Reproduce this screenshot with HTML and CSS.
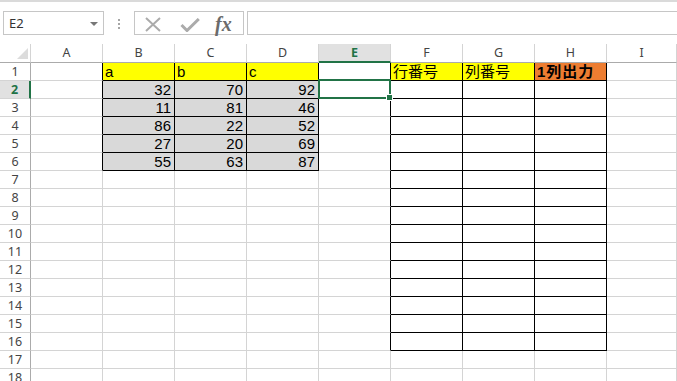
FILE: index.html
```html
<!DOCTYPE html>
<html lang="ja">
<head>
  <meta charset="UTF-8" />
  <meta name="viewport" content="width=device-width, initial-scale=1.0" />
  <title>Book1 - Excel</title>
  <link rel="stylesheet" href="styles.css">
</head>
<body>
  <div class="topline"></div>

  <div class="formula-bar">
    <div class="name-box">E2 <span class="caret"></span></div>
    <div class="grip">
      <svg width="4" height="10" viewBox="0 0 4 10"><rect x="1" y="0" width="2" height="2" fill="#a6a6a6"/><rect x="1" y="4" width="2" height="2" fill="#a6a6a6"/><rect x="1" y="8" width="2" height="2" fill="#a6a6a6"/></svg>
    </div>
    <div class="fx-box">
      <svg class="btn-x" width="18" height="15" viewBox="0 0 18 15"><path d="M2 1L16 14M16 1L2 14" stroke="#ababab" stroke-width="2" fill="none"/></svg>
      <svg class="btn-ok" width="20" height="14" viewBox="0 0 20 14"><path d="M1.5 7L7 12.5L18.8 1" stroke="#ababab" stroke-width="3" fill="none"/></svg>
      <span class="fx">fx</span>
    </div>
    <div class="formula-input"></div>
  </div>

  <div class="sheet">
    <div class="corner"><span class="tri"></span></div>
    <div class="ch">A</div><div class="ch">B</div><div class="ch">C</div><div class="ch">D</div>
    <div class="ch active">E</div><div class="ch">F</div><div class="ch">G</div><div class="ch">H</div><div class="ch">I</div>

    <div class="rh">1</div><div class="c br"></div>
    <div class="c yl br bb">a</div><div class="c yl br bb">b</div><div class="c yl br bb">c</div>
    <div class="c br"></div>
    <div class="c yl br bb">行番号</div><div class="c yl br bb">列番号</div><div class="c og br bb bold">1列出力</div>
    <div class="c"></div>

    <div class="rh active">2</div><div class="c br"></div>
    <div class="c gy num br bb">32</div><div class="c gy num br bb">70</div><div class="c gy num br bb">92</div>
    <div class="c br sel"><span class="handle"></span></div>
    <div class="c br bb"></div><div class="c br bb"></div><div class="c br bb"></div><div class="c"></div>

    <div class="rh">3</div><div class="c br"></div>
    <div class="c gy num br bb">11</div><div class="c gy num br bb">81</div><div class="c gy num br bb">46</div>
    <div class="c br"></div>
    <div class="c br bb"></div><div class="c br bb"></div><div class="c br bb"></div><div class="c"></div>

    <div class="rh">4</div><div class="c br"></div>
    <div class="c gy num br bb">86</div><div class="c gy num br bb">22</div><div class="c gy num br bb">52</div>
    <div class="c br"></div>
    <div class="c br bb"></div><div class="c br bb"></div><div class="c br bb"></div><div class="c"></div>

    <div class="rh">5</div><div class="c br"></div>
    <div class="c gy num br bb">27</div><div class="c gy num br bb">20</div><div class="c gy num br bb">69</div>
    <div class="c br"></div>
    <div class="c br bb"></div><div class="c br bb"></div><div class="c br bb"></div><div class="c"></div>

    <div class="rh">6</div><div class="c br"></div>
    <div class="c gy num br bb">55</div><div class="c gy num br bb">63</div><div class="c gy num br bb">87</div>
    <div class="c br"></div>
    <div class="c br bb"></div><div class="c br bb"></div><div class="c br bb"></div><div class="c"></div>

    <div class="rh">7</div><div class="c"></div><div class="c"></div><div class="c"></div><div class="c"></div><div class="c br"></div><div class="c br bb"></div><div class="c br bb"></div><div class="c br bb"></div><div class="c"></div>
    <div class="rh">8</div><div class="c"></div><div class="c"></div><div class="c"></div><div class="c"></div><div class="c br"></div><div class="c br bb"></div><div class="c br bb"></div><div class="c br bb"></div><div class="c"></div>
    <div class="rh">9</div><div class="c"></div><div class="c"></div><div class="c"></div><div class="c"></div><div class="c br"></div><div class="c br bb"></div><div class="c br bb"></div><div class="c br bb"></div><div class="c"></div>
    <div class="rh">10</div><div class="c"></div><div class="c"></div><div class="c"></div><div class="c"></div><div class="c br"></div><div class="c br bb"></div><div class="c br bb"></div><div class="c br bb"></div><div class="c"></div>
    <div class="rh">11</div><div class="c"></div><div class="c"></div><div class="c"></div><div class="c"></div><div class="c br"></div><div class="c br bb"></div><div class="c br bb"></div><div class="c br bb"></div><div class="c"></div>
    <div class="rh">12</div><div class="c"></div><div class="c"></div><div class="c"></div><div class="c"></div><div class="c br"></div><div class="c br bb"></div><div class="c br bb"></div><div class="c br bb"></div><div class="c"></div>
    <div class="rh">13</div><div class="c"></div><div class="c"></div><div class="c"></div><div class="c"></div><div class="c br"></div><div class="c br bb"></div><div class="c br bb"></div><div class="c br bb"></div><div class="c"></div>
    <div class="rh">14</div><div class="c"></div><div class="c"></div><div class="c"></div><div class="c"></div><div class="c br"></div><div class="c br bb"></div><div class="c br bb"></div><div class="c br bb"></div><div class="c"></div>
    <div class="rh">15</div><div class="c"></div><div class="c"></div><div class="c"></div><div class="c"></div><div class="c br"></div><div class="c br bb"></div><div class="c br bb"></div><div class="c br bb"></div><div class="c"></div>
    <div class="rh">16</div><div class="c"></div><div class="c"></div><div class="c"></div><div class="c"></div><div class="c br"></div><div class="c br bb"></div><div class="c br bb"></div><div class="c br bb"></div><div class="c"></div>
    <div class="rh">17</div><div class="c"></div><div class="c"></div><div class="c"></div><div class="c"></div><div class="c"></div><div class="c"></div><div class="c"></div><div class="c"></div><div class="c"></div>
    <div class="rh">18</div><div class="c"></div><div class="c"></div><div class="c"></div><div class="c"></div><div class="c"></div><div class="c"></div><div class="c"></div><div class="c"></div><div class="c"></div>
  </div>
</body>
</html>
```

FILE: styles.css
```css
body {
  margin: 0;
  background: #fff;
  font-family: "Liberation Sans", "Noto Sans CJK JP", sans-serif;
  overflow: hidden;
}
.topline {
  height: 2px;
  background: #dadada;
}

/* formula bar */
.formula-bar {
  display: flex;
  align-items: center;
  height: 24px;
  margin: 9px 0 9px 3px;
}
.name-box {
  flex: 0 0 101px;
  height: 24px;
  box-sizing: border-box;
  border: 1px solid #c6c6c6;
  display: flex;
  align-items: center;
  justify-content: space-between;
  padding: 0 5px 0 5px;
  font: 13px "Noto Sans", sans-serif;
  color: #333;
}
.caret {
  width: 0;
  height: 0;
  border-left: 4px solid transparent;
  border-right: 4px solid transparent;
  border-top: 4px solid #777;
  margin-top: 1px;
}
.grip {
  flex: 0 0 30px;
  display: flex;
  justify-content: center;
  padding-top: 2px;
}
.fx-box {
  flex: 0 0 110px;
  height: 24px;
  box-sizing: border-box;
  border: 1px solid #c6c6c6;
  display: flex;
  align-items: center;
  padding: 2px 0 0 9px;
}
.btn-ok {
  margin-left: 18px;
  margin-top: 2px;
}
.fx {
  margin-left: 15px;
  font: italic bold 20px "Liberation Serif", serif;
  color: #6b6b6b;
  line-height: 20px;
}
.formula-input {
  flex: 1;
  height: 24px;
  box-sizing: border-box;
  border: 1px solid #c6c6c6;
  border-right: 0;
  margin-left: 3px;
}

/* sheet grid */
.sheet {
  display: grid;
  grid-template-columns: 31px repeat(8, 72px) 70px;
  grid-template-rows: 19px;
  grid-auto-rows: 18px;
  height: 337px;
  overflow: hidden;
}
.sheet > div {
  box-sizing: border-box;
}
.corner {
  border-right: 1px solid #d4d4d4;
  border-bottom: 1px solid #ababab;
  display: flex;
  align-items: flex-end;
  justify-content: flex-end;
  padding: 0 2px 3px 0;
}
.tri {
  width: 0;
  height: 0;
  border-left: 11px solid transparent;
  border-bottom: 11px solid #dcdcdc;
}
.ch {
  border-right: 1px solid #d4d4d4;
  border-bottom: 1px solid #ababab;
  text-align: center;
  font: 12.5px/18px "Noto Sans", sans-serif;
  color: #444;
}
.ch.active {
  background: #e1e1e1;
  color: #217346;
  font-weight: bold;
  border-bottom: 2px solid #217346;
}
.rh {
  border-right: 1px solid #ababab;
  border-bottom: 1px solid #d4d4d4;
  text-align: center;
  font: 12.5px/17px "Noto Sans", sans-serif;
  color: #444;
}
.rh.active {
  background: #e1e1e1;
  color: #217346;
  font-weight: bold;
  border-right: 2px solid #217346;
}
.c {
  border-right: 1px solid #d4d4d4;
  border-bottom: 1px solid #d4d4d4;
  font-size: 15px;
  line-height: 17px;
  padding: 0 3px 0 2px;
  white-space: nowrap;
  overflow: hidden;
  color: #000;
}
.c.br {
  border-right-color: #000;
}
.c.bb {
  border-bottom-color: #000;
}
.yl {
  background: #ffff00;
}
.og {
  background: #ed7d31;
}
.gy {
  background: #d9d9d9;
}
.num {
  text-align: right;
}
.bold {
  font-weight: bold;
  letter-spacing: 1px;
}

/* active cell */
.sel {
  position: relative;
  overflow: visible !important;
}
.sel::after {
  content: "";
  position: absolute;
  top: -2px;
  left: -1px;
  right: -1px;
  bottom: -1px;
  border: 2px solid #217346;
}
.handle {
  position: absolute;
  right: -3px;
  bottom: -3px;
  width: 7px;
  height: 7px;
  box-sizing: border-box;
  background: #217346;
  border: 1px solid #fff;
  z-index: 2;
}
```
